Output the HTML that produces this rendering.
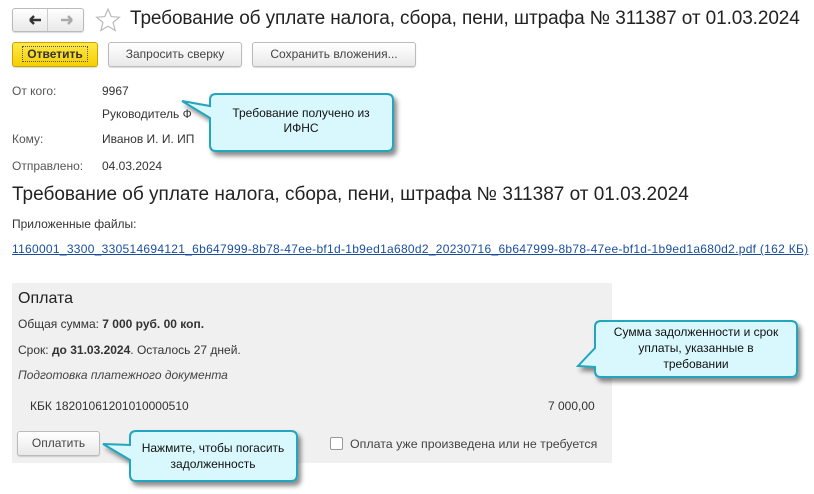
<!DOCTYPE html>
<html><head><meta charset="utf-8"><style>
*{margin:0;padding:0;box-sizing:border-box}
body{width:814px;height:494px;background:#fff;font-family:"Liberation Sans",Arial,sans-serif;color:#333;font-size:12px;position:relative;overflow:hidden}
.a{position:absolute;white-space:nowrap}
.btn{position:absolute;height:25px;border:1px solid #bbb;border-radius:3px;background:linear-gradient(#fff,#e9e9e9);font-size:12px;color:#444;text-align:center;line-height:23px;box-shadow:0 1px 1px rgba(0,0,0,.15)}
.lbl{color:#555}
</style></head><body>
<div class="btn" style="left:12px;top:8px;width:72px;height:24px"></div>
<div class="a" style="left:47px;top:9px;width:1px;height:22px;background:#ccc"></div>
<svg class="a" style="left:12px;top:8px" width="72" height="24"><path d="M18 12h11M18 12l4-4M18 12l4 4" stroke="#333" stroke-width="2.4" fill="none"/><path d="M60 12h-11M60 12l-4-4M60 12l-4 4" stroke="#aaa" stroke-width="2.4" fill="none"/></svg>
<svg class="a" style="left:95px;top:7px" width="26" height="26"><path d="M13 2l3.2 7.6 8.2.6-6.3 5.3 2 8L13 19.2 5.9 23.5l2-8L1.6 10.2l8.2-.6z" fill="none" stroke="#bbb" stroke-width="1.2"/></svg>
<div class="a" style="left:130px;top:8px;font-size:19px;letter-spacing:-0.1px;color:#222">Требование об уплате налога, сбора, пени, штрафа № 311387 от 01.03.2024</div>
<div class="btn" style="left:12px;top:42px;width:86px;background:linear-gradient(#ffe84a,#f5cf00);border-color:#c9a500;color:#333;font-weight:bold"><span style="border:1px dotted #555;padding:0 4px">Ответить</span></div>
<div class="btn" style="left:108px;top:42px;width:134px">Запросить сверку</div>
<div class="btn" style="left:252px;top:42px;width:164px">Сохранить вложения...</div>
<div class="a lbl" style="left:12px;top:84px">От кого:</div>
<div class="a" style="left:102px;top:84px">9967</div>
<div class="a" style="left:102px;top:107px">Руководитель Ф</div>
<div class="a lbl" style="left:12px;top:132px">Кому:</div>
<div class="a" style="left:102px;top:132px">Иванов И. И. ИП</div>
<div class="a lbl" style="left:12px;top:159px">Отправлено:</div>
<div class="a" style="left:102px;top:159px">04.03.2024</div>
<div class="a" style="left:12px;top:184px;font-size:19px;color:#222">Требование об уплате налога, сбора, пени, штрафа № 311387 от 01.03.2024</div>
<div class="a" style="left:12px;top:217px">Приложенные файлы:</div>
<div class="a" style="left:12px;top:242px;color:#1a4fa0;text-decoration:underline;font-size:12px;letter-spacing:0.29px">1160001_3300_330514694121_6b647999-8b78-47ee-bf1d-1b9ed1a680d2_20230716_6b647999-8b78-47ee-bf1d-1b9ed1a680d2.pdf (162 КБ)</div>
<div class="a" style="left:12px;top:283px;width:600px;height:180px;background:#f0f0f0"></div>
<div class="a" style="left:18px;top:290px;font-size:16px;color:#222">Оплата</div>
<div class="a" style="left:18px;top:317px">Общая сумма: <b>7 000 руб. 00 коп.</b></div>
<div class="a" style="left:18px;top:343px">Срок: <b>до 31.03.2024</b>. Осталось 27 дней.</div>
<div class="a" style="left:18px;top:368px;font-style:italic;color:#444">Подготовка платежного документа</div>
<div class="a" style="left:30px;top:399px">КБК 18201061201010000510</div>
<div class="a" style="left:548px;top:399px">7 000,00</div>
<div class="btn" style="left:17px;top:431px;width:83px">Оплатить</div>
<div class="a" style="left:330px;top:437px;width:13px;height:13px;border:1px solid #999;border-radius:2px;background:#fff"></div>
<div class="a" style="left:350px;top:437px;color:#444;font-size:12.4px">Оплата уже произведена или не требуется</div>
<svg class="a" style="left:0;top:0" width="814" height="494">
<defs><filter id="s" x="-20%" y="-20%" width="140%" height="150%"><feDropShadow dx="3" dy="4" stdDeviation="2.5" flood-color="#000" flood-opacity="0.45"/></filter></defs>
<g fill="#d8f8fd" stroke="#21a5bd" stroke-width="2" filter="url(#s)">
<path d="M216,94 H387 Q393,94 393,100 V145 Q393,151 387,151 H216 Q210,151 210,145 V118 L182,101 L210,106 V100 Q210,94 216,94 Z"/>
<path d="M601,321 H791 Q797,321 797,327 V371 Q797,377 791,377 H601 Q595,377 595,371 V367 L578,366 L595,348 V327 Q595,321 601,321 Z"/>
<path d="M136,431 H291 Q297,431 297,437 V475 Q297,481 291,481 H136 Q130,481 130,475 V460 L103,444 L130,445 V437 Q130,431 136,431Z"/>
</g>
<g font-family="Liberation Sans, Arial, sans-serif" font-size="12" fill="#111" text-anchor="middle">
<text x="301" y="117">Требование получено из</text><text x="301" y="132">ИФНС</text>
<text x="696" y="336">Сумма задолженности и срок</text><text x="696" y="352">уплаты, указанные в</text><text x="696" y="368">требовании</text>
<text x="213" y="452">Нажмите, чтобы погасить</text><text x="213" y="468">задолженность</text>
</g>
</svg>
</body></html>
